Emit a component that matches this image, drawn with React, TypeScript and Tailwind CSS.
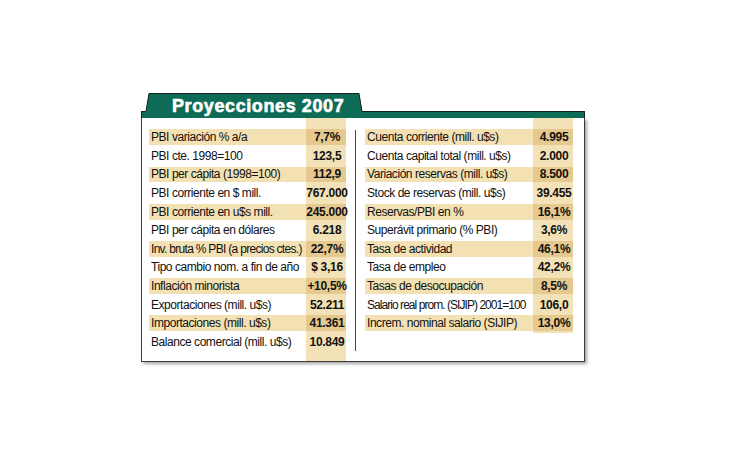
type Row = { label: string; value: string; hl?: boolean; tight?: string };

const left: Row[] = [
  { label: "PBI variación % a/a", value: "7,7%", hl: true },
  { label: "PBI cte. 1998=100", value: "123,5" },
  { label: "PBI per cápita (1998=100)", value: "112,9", hl: true },
  { label: "PBI corriente en $ mill.", value: "767.000" },
  { label: "PBI corriente en u$s mill.", value: "245.000", hl: true },
  { label: "PBI per cápita en dólares", value: "6.218" },
  { label: "Inv. bruta % PBI (a precios ctes.)", value: "22,7%", hl: true, tight: "tracking-[-0.7px]" },
  { label: "Tipo cambio nom. a fin de año", value: "$ 3,16" },
  { label: "Inflación minorista", value: "+10,5%", hl: true },
  { label: "Exportaciones (mill. u$s)", value: "52.211" },
  { label: "Importaciones (mill. u$s)", value: "41.361", hl: true },
  { label: "Balance comercial (mill. u$s)", value: "10.849" },
];

const right: Row[] = [
  { label: "Cuenta corriente (mill. u$s)", value: "4.995", hl: true },
  { label: "Cuenta capital total (mill. u$s)", value: "2.000" },
  { label: "Variación reservas (mill. u$s)", value: "8.500", hl: true },
  { label: "Stock de reservas (mill. u$s)", value: "39.455" },
  { label: "Reservas/PBI en %", value: "16,1%", hl: true },
  { label: "Superávit primario (% PBI)", value: "3,6%" },
  { label: "Tasa de actividad", value: "46,1%", hl: true },
  { label: "Tasa de empleo", value: "42,2%" },
  { label: "Tasas de desocupación", value: "8,5%", hl: true },
  { label: "Salario real prom. (SIJIP) 2001=100", value: "106,0", tight: "tracking-[-0.95px]" },
  { label: "Increm. nominal salario (SIJIP)", value: "13,0%", hl: true },
];

function Table({ rows, labelWidth }: { rows: Row[]; labelWidth: string }) {
  return (
    <div className="flex">
      <div className={`${labelWidth} pt-[10px]`}>
        {rows.map((r) => (
          <div key={r.label} className="h-[18.6px] py-[1.4px]">
            <div
              className={`flex h-full items-center whitespace-nowrap pl-[2px] ${r.tight ?? "tracking-[-0.45px]"} ${
                r.hl ? "bg-[#f3e1b3]" : ""
              }`}
            >
              {r.label}
            </div>
          </div>
        ))}
      </div>
      <div className="w-[40px] bg-[#f3e2b7] pt-[10px]">
        {rows.map((r) => (
          <div key={r.label} className="h-[18.6px] py-[1.4px]">
            <div
              className={`flex h-full items-center justify-center whitespace-nowrap pl-[2px] font-bold tracking-[-0.3px] ${
                r.hl ? "bg-[#e5c98e]" : ""
              }`}
            >
              {r.value}
            </div>
          </div>
        ))}
      </div>
    </div>
  );
}

export default function App() {
  return (
    <div className="h-[460px] w-[730px] bg-white pl-[141px] pt-[93px] font-['Liberation_Sans',Arial,sans-serif] text-[12px] text-[#111]">
      <div className="w-[444px]">
        <div className="relative h-[25px]">
          <svg className="absolute inset-0" width="444" height="25" viewBox="0 0 444 25">
            <path d="M0 18 H5 L8 0 H218 L221 18 H444 V25 H0 Z" fill="#0e6b56" />
            <path
              d="M0.5 25 V18.5 H5 L8 0.5 H218 L221 18.5 H443.5 V25"
              fill="none"
              stroke="#13241d"
              strokeWidth="1"
            />
          </svg>
          <div className="relative pl-[31px] pt-[4px] text-[18px] font-bold leading-[18px] tracking-[0.6px] text-white [-webkit-text-stroke:0.6px_white]">
            Proyecciones 2007
          </div>
        </div>
        <div className="flex h-[244px] border-x border-b border-[#3b3b3b] bg-white pl-[7px] shadow-[2px_2px_3px_rgba(0,0,0,0.35)]">
          <Table rows={left} labelWidth="w-[157px]" />
          <div className="ml-[9px] mt-[12px] h-[221px] w-px bg-[#444]" />
          <div className="ml-[9px]">
            <Table rows={right} labelWidth="w-[168px]" />
          </div>
        </div>
      </div>
    </div>
  );
}
